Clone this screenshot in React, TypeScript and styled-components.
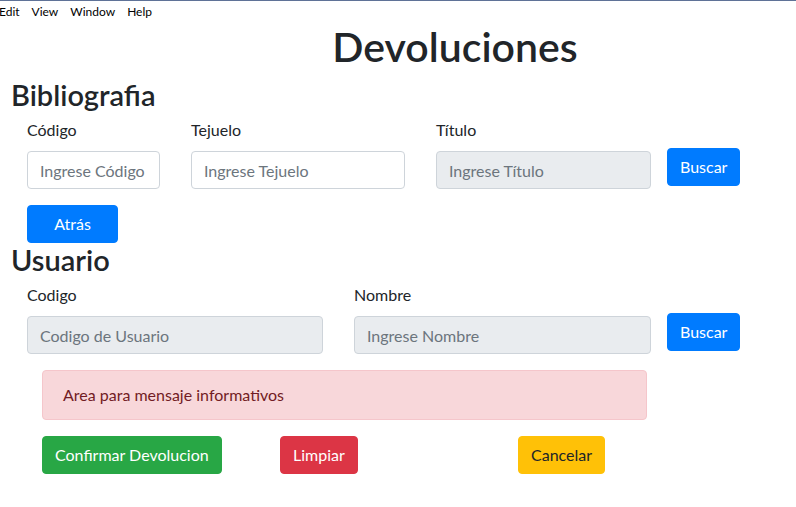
import React from "react";
import styled, { createGlobalStyle } from "styled-components";

const Global = createGlobalStyle`
  html, body { margin: 0; padding: 0; background: #fff; }
  body {
    font-family: Lato, "Open Sans", "Liberation Sans", sans-serif;
    color: #212529;
    font-size: 16px;
  }
  * { box-sizing: border-box; }
`;

const Page = styled.div`
  width: 796px;
  height: 507px;
  overflow: hidden;
`;

const MenuBar = styled.nav`
  height: 23px;
  border-top: 1px solid #5f7297;
  display: flex;
  align-items: center;
  gap: 12px;
  margin-left: -1px;
  font-size: 12px;
  line-height: 22px;
  color: #000;
`;

const MenuItem = styled.span``;

const Title = styled.h1`
  margin: 0 0 0 114px;
  text-align: center;
  font-size: 41px;
  line-height: 48px;
  font-weight: 600;
`;

const Heading = styled.h2<{ $top?: number }>`
  margin: ${(p) => p.$top ?? 0}px 0 0 11px;
  font-size: 29px;
  line-height: 34px;
  font-weight: 600;
`;

const FieldRow = styled.div<{ $top?: number }>`
  display: flex;
  align-items: flex-end;
  gap: 31px;
  padding-left: 27px;
  margin-top: ${(p) => p.$top ?? 6}px;
`;

const Field = styled.div<{ $w: number }>`
  display: flex;
  flex-direction: column;
  width: ${(p) => p.$w}px;
`;

const Label = styled.label`
  font-size: 16px;
  line-height: 24px;
  margin-bottom: 9px;
`;

const Input = styled.input<{ $disabled?: boolean }>`
  height: 38px;
  width: 100%;
  padding: 6px 12px;
  font: inherit;
  font-size: 16px;
  color: #495057;
  background: ${(p) => (p.$disabled ? "#e9ecef" : "#fff")};
  border: 1px solid #ced4da;
  border-radius: 4px;
  outline: none;
  &::placeholder {
    color: #6c757d;
  }
`;

const tones = {
  primary: { bg: "#007bff", fg: "#fff" },
  success: { bg: "#28a745", fg: "#fff" },
  danger: { bg: "#dc3545", fg: "#fff" },
  warning: { bg: "#ffc107", fg: "#212529" },
};

const Button = styled.button<{ $tone: keyof typeof tones; $w?: number }>`
  height: 38px;
  ${(p) => (p.$w ? `width: ${p.$w}px;` : "")}
  padding: 0 12px;
  font: inherit;
  font-size: 16px;
  line-height: 24px;
  border: 1px solid ${(p) => tones[p.$tone].bg};
  border-radius: 4px;
  background: ${(p) => tones[p.$tone].bg};
  color: ${(p) => tones[p.$tone].fg};
  white-space: nowrap;
  cursor: pointer;
`;

const SearchButton = styled(Button)`
  margin-left: -15px;
  margin-bottom: 3px;
`;

const BackRow = styled.div`
  padding-left: 27px;
  margin-top: 16px;
`;

const Alert = styled.div`
  margin: 16px 0 0 42px;
  width: 605px;
  height: 50px;
  padding: 12px 20px;
  background: #f8d7da;
  border: 1px solid #f5c6cb;
  border-radius: 4px;
  color: #721c24;
  line-height: 24px;
`;

const ActionRow = styled.div`
  display: grid;
  grid-template-columns: 238px 238px auto;
  justify-items: start;
  margin: 16px 0 0 42px;
`;

export default function App() {
  return (
    <Page>
      <Global />
      <MenuBar>
        <MenuItem>Edit</MenuItem>
        <MenuItem>View</MenuItem>
        <MenuItem>Window</MenuItem>
        <MenuItem>Help</MenuItem>
      </MenuBar>
      <Title>Devoluciones</Title>

      <Heading $top={7}>Bibliografia</Heading>
      <FieldRow>
        <Field $w={133}>
          <Label>Código</Label>
          <Input placeholder="Ingrese Código" />
        </Field>
        <Field $w={214}>
          <Label>Tejuelo</Label>
          <Input placeholder="Ingrese Tejuelo" />
        </Field>
        <Field $w={215}>
          <Label>Título</Label>
          <Input placeholder="Ingrese Título" $disabled readOnly />
        </Field>
        <SearchButton $tone="primary">Buscar</SearchButton>
      </FieldRow>
      <BackRow>
        <Button $tone="primary" $w={91}>
          Atrás
        </Button>
      </BackRow>

      <Heading>Usuario</Heading>
      <FieldRow>
        <Field $w={296}>
          <Label>Codigo</Label>
          <Input placeholder="Codigo de Usuario" $disabled readOnly />
        </Field>
        <Field $w={297}>
          <Label>Nombre</Label>
          <Input placeholder="Ingrese Nombre" $disabled readOnly />
        </Field>
        <SearchButton $tone="primary">Buscar</SearchButton>
      </FieldRow>

      <Alert>Area para mensaje informativos</Alert>

      <ActionRow>
        <Button $tone="success">Confirmar Devolucion</Button>
        <Button $tone="danger">Limpiar</Button>
        <Button $tone="warning">Cancelar</Button>
      </ActionRow>
    </Page>
  );
}
